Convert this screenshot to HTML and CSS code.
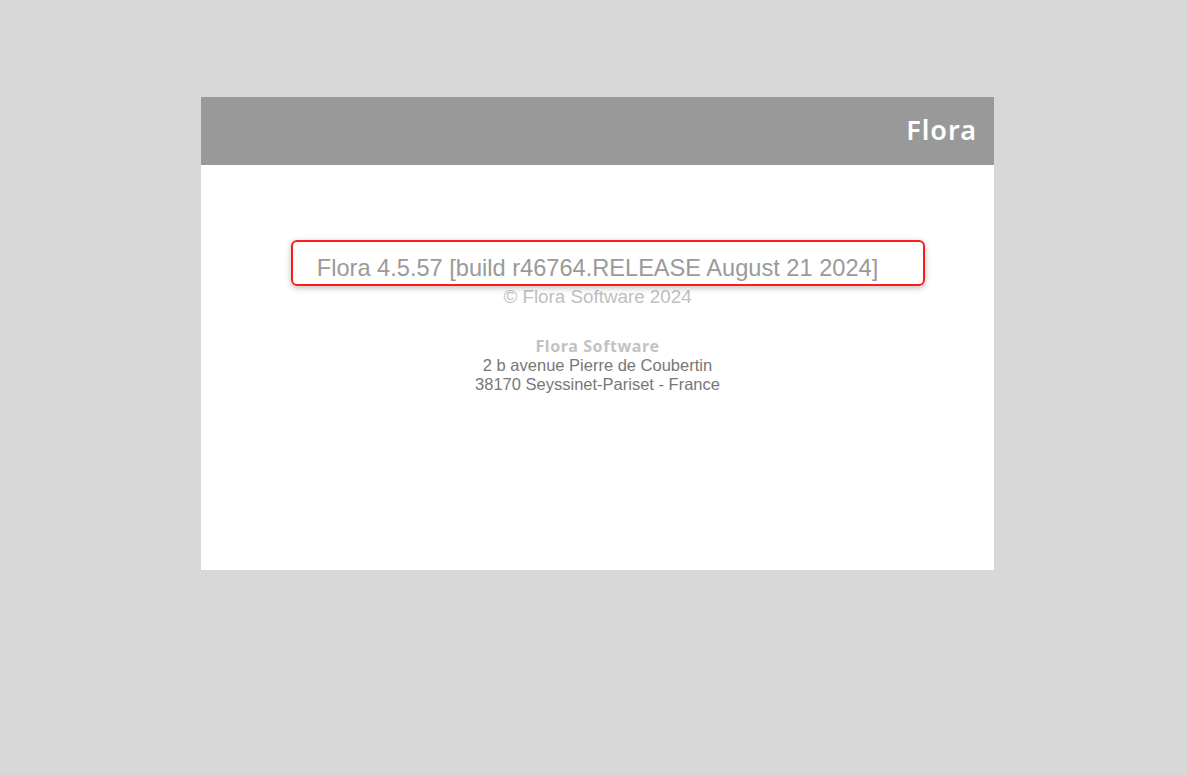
FILE: index.html
```html
<!DOCTYPE html>
<html>
<head>
<meta charset="utf-8">
<link rel="stylesheet" href="styles.css">
</head>
<body>
<div class="panel">
  <div class="header"><span class="brand">Flora</span></div>
  <div class="content">
    <div class="version">Flora 4.5.57 [build r46764.RELEASE August 21 2024]</div>
    <div class="copyright">© Flora Software 2024</div>
    <div class="address">
      <div class="company">Flora Software</div>
      <div class="line">2 b avenue Pierre de Coubertin</div>
      <div class="line">38170 Seyssinet-Pariset - France</div>
    </div>
    <div class="highlight"></div>
  </div>
</div>
</body>
</html>
```
FILE: styles.css
```css
html, body {
  margin: 0;
  padding: 0;
  background: #d8d8d8;
}
.panel {
  margin: 97px 0 0 201px;
  width: 793px;
  height: 473px;
  background: #fff;
  display: flex;
  flex-direction: column;
}
.header {
  height: 68px;
  background: #999999;
  display: flex;
  align-items: center;
  justify-content: flex-end;
  padding-right: 17px;
}
.brand {
  font-family: "Noto Sans", sans-serif;
  font-weight: 600;
  font-size: 27px;
  color: #fff;
  letter-spacing: 1px;
  padding-bottom: 3px;
}
.content {
  position: relative;
  flex: 1;
  padding-top: 90px;
  text-align: center;
  font-family: "Liberation Sans", Arial, sans-serif;
}
.version {
  font-size: 23.6px;
  line-height: 27px;
  color: #9a9a9a;
}
.copyright {
  margin-top: 4px;
  font-size: 18.8px;
  line-height: 22px;
  color: #c0c0c0;
}
.address {
  margin-top: 29px;
}
.company {
  font-family: "Noto Sans", sans-serif;
  font-weight: 700;
  font-size: 16px;
  line-height: 19px;
  letter-spacing: 0.6px;
  color: #c2c2c2;
}
.line {
  font-size: 16.5px;
  line-height: 19px;
  color: #777;
}
.highlight {
  position: absolute;
  left: 90px;
  top: 75px;
  width: 630px;
  height: 42px;
  border: 2px solid #ff1a1a;
  border-radius: 6px;
  box-shadow: 0 2px 6px rgba(0,0,0,0.25);
  pointer-events: none;
}
```
